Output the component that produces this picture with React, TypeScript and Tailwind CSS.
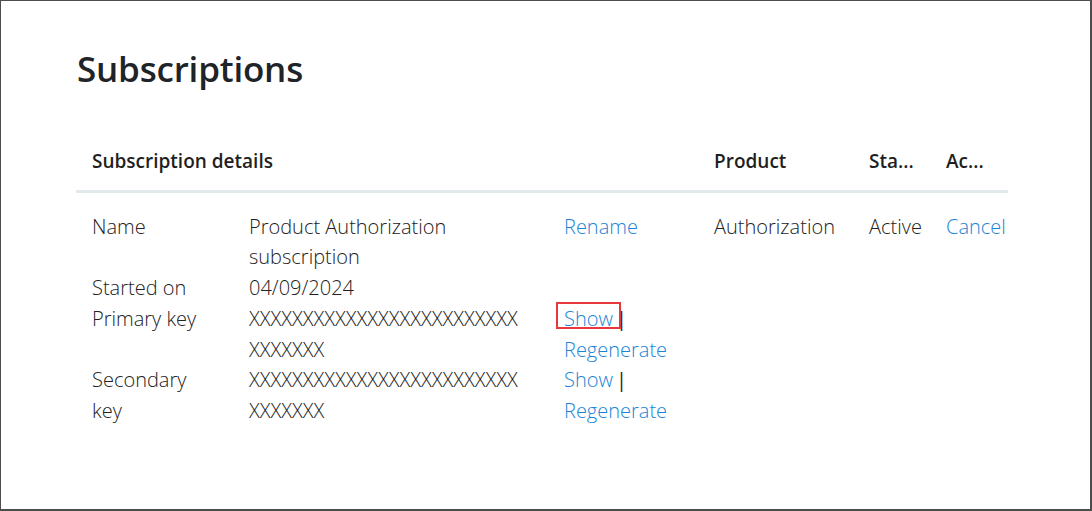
export default function App() {
  const link = 'text-[#1a84d6]';
  return (
    <div className="w-[1092px] h-[511px] bg-white border-l border-t border-r-2 border-b-2 border-[#4d4d4d] font-['Open_Sans',sans-serif] text-[#222]">
      <div className="pl-[75px] pt-[40px] w-[1007px] box-content">
        <h1 className="text-[35px] font-semibold leading-[56px] text-[#1f2428] tracking-[-0.2px] pl-[1px]">Subscriptions</h1>

        <table className="mt-[34px] w-[932px] table-fixed border-collapse text-[20px] font-light leading-[30.8px]">
          <colgroup>
            <col className="w-[173px]" />
            <col className="w-[315px]" />
            <col className="w-[150px]" />
            <col className="w-[155px]" />
            <col className="w-[77px]" />
            <col className="w-[62px]" />
          </colgroup>
          <thead>
            <tr className="border-b-[3px] border-[#e1e9ec] text-[19px] text-[#1f1f1f]">
              <th colSpan={3} className="pl-4 text-left font-semibold h-[60px] align-middle pt-[2px]">Subscription details</th>
              <th className="text-left font-semibold align-middle pt-[2px]">Product</th>
              <th className="text-left font-semibold align-middle pt-[2px]">Sta...</th>
              <th className="text-left font-semibold align-middle pt-[2px]">Ac...</th>
            </tr>
          </thead>
          <tbody>
            <tr className="align-top">
              <td className="pl-4 pt-[19px]">Name</td>
              <td className="pt-[19px]">
                Product Authorization
                <br />
                subscription
              </td>
              <td className={`pt-[19px] ${link}`}>Rename</td>
              <td className="pt-[19px]">Authorization</td>
              <td className="pt-[19px]">Active</td>
              <td className={`pt-[19px] ${link}`}>Cancel</td>
            </tr>
            <tr className="align-top">
              <td className="pl-4">Started on</td>
              <td>04/09/2024</td>
              <td />
              <td />
              <td />
              <td />
            </tr>
            <tr className="align-top">
              <td className="pl-4">Primary key</td>
              <td>
                XXXXXXXXXXXXXXXXXXXXXXXXX
                <br />
                XXXXXXX
              </td>
              <td>
                <span className={`${link} relative`}>
                  Show
                  <span className="absolute left-[-8px] right-[-8px] top-[-3px] bottom-[3px] border-2 border-[#e8383d]" />
                </span>
                <span className="font-normal ml-[-2px]"> |</span>
                <br />
                <span className={link}>Regenerate</span>
              </td>
              <td />
              <td />
              <td />
            </tr>
            <tr className="align-top">
              <td className="pl-4">
                Secondary
                <br />
                key
              </td>
              <td>
                XXXXXXXXXXXXXXXXXXXXXXXXX
                <br />
                XXXXXXX
              </td>
              <td>
                <span className={link}>Show</span>
                <span className="font-normal ml-[-2px]"> |</span>
                <br />
                <span className={link}>Regenerate</span>
              </td>
              <td />
              <td />
              <td />
            </tr>
          </tbody>
        </table>
      </div>
    </div>
  );
}
